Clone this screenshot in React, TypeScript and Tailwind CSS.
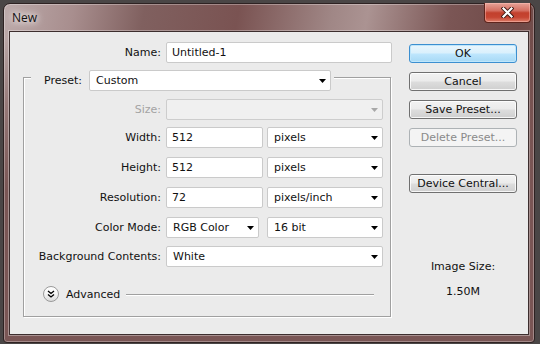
import React from 'react';

const Arrow = ({ disabled }: { disabled?: boolean }) => (
    <svg width="7" height="4" viewBox="0 0 7 4" className="shrink-0">
        <path d="M0 0h7L3.5 4z" fill={disabled ? '#a8a8a8' : '#000'} />
    </svg>
);

const Combo = ({ value, className, disabled }: { value: string; className: string; disabled?: boolean }) => (
    <div
        className={`flex h-[21px] items-center justify-between rounded-[2px] border pl-[6px] pr-[4px] ${
            disabled ? 'border-[#cdcdcd] bg-[#f0f0f0]' : 'border-[#cacaca] bg-white'
        } ${className}`}
    >
        <span>{value}</span>
        <Arrow disabled={disabled} />
    </div>
);

const TextBox = ({ value, className }: { value: string; className: string }) => (
    <div className={`flex h-[21px] items-center rounded-[2px] border border-[#cacaca] bg-white pl-[5px] ${className}`}>
        {value}
    </div>
);

const Row = ({ label, className, children, muted }: { label: string; className: string; children: React.ReactNode; muted?: boolean }) => (
    <div className={`flex h-[21px] items-center ${className}`}>
        <div className={`w-[137px] text-right ${muted ? 'text-[#a3a3a3]' : ''}`}>{label}</div>
        <div className="ml-[5px] flex items-center">{children}</div>
    </div>
);

const Button = ({ label, className, variant }: { label: string; className: string; variant?: 'default' | 'disabled' }) => {
    let look =
        'border-[#707070] bg-[linear-gradient(180deg,#f2f2f2_0%,#ebebeb_48%,#dddddd_52%,#cfcfcf_100%)] shadow-[inset_0_0_0_1px_rgba(255,255,255,0.8)]';
    if (variant === 'default') {
        look =
            'border-[#3c8fd0] bg-[linear-gradient(180deg,#eaf6fd_0%,#d9f0fc_48%,#bee6fd_52%,#a7d9f5_100%)] shadow-[inset_0_0_0_1px_#bfe6fb]';
    }
    if (variant === 'disabled') {
        look = 'border-[#adb2b5] bg-[#f4f4f4] text-[#8a8a8a]';
    }
    return (
        <div className={`flex h-[19px] w-[108px] items-center justify-center rounded-[3px] border ${look} ${className}`}>
            {label}
        </div>
    );
};

const App: React.FC = () => {
    return (
        <div className="h-[344px] w-[540px] overflow-hidden bg-[#4a4646] pl-[3px] pt-[3px]">
            <div className="flex h-[340px] w-[532px] flex-col rounded-t-[7px] rounded-b-[4px] border border-[#2e2222] bg-[linear-gradient(180deg,transparent_0%,transparent_10%,rgba(122,86,85,0.55)_30%,#7a5655_55%,#7a5655_100%),linear-gradient(100deg,#bcaaaa_0%,#a88e8e_12%,#80605f_24%,#7a5352_40%,#a08786_56%,#ab9392_62%,#7b5655_76%,#6e4947_88%,#835e5c_100%)] shadow-[inset_0_0_0_1px_rgba(255,255,255,0.3)]">
                {/* title bar */}
                <div className="flex h-[27px] items-start justify-between">
                    <div className="self-center pl-[8px] font-['Open_Sans',sans-serif] text-[12px] leading-[16px] text-[#111] [text-shadow:0_0_6px_#fff,0_0_10px_rgba(255,255,255,0.9)]">
                        New
                    </div>
                    <div className="-mt-[1px] mr-[3px] flex h-[20px] w-[47px] items-center justify-center rounded-b-[4px] border border-t-0 border-[#5e241c] bg-[linear-gradient(180deg,#e7a398_0%,#d46f61_40%,#c2402d_52%,#c64532_75%,#dd7d69_100%)] shadow-[inset_0_0_0_1px_rgba(255,200,190,0.45)]">
                        <svg width="13" height="11" viewBox="0 0 13 11">
                            <path d="M2.5 1.5L10.5 9.5M10.5 1.5L2.5 9.5" stroke="#3b1712" strokeWidth="4" strokeLinecap="square" />
                            <path d="M2.5 1.5L10.5 9.5M10.5 1.5L2.5 9.5" stroke="#fff" strokeWidth="2.2" strokeLinecap="square" />
                        </svg>
                    </div>
                </div>

                {/* client area */}
                <div className="px-[5px] pb-[7px]">
                    <div className="flex h-[304px] w-[520px] border border-[#3d2e2e] bg-[#ebebeb] font-['DejaVu_Sans',sans-serif] text-[11px] leading-[13px] text-[#111] shadow-[0_0_0_1px_rgba(255,255,255,0.35)]">
                        {/* left column */}
                        <div className="w-[382px]">
                            <div className="mt-[10px] flex h-[21px] items-center">
                                <div className="w-[151px] text-right">Name:</div>
                                <TextBox value="Untitled-1" className="ml-[5px] w-[226px]" />
                            </div>

                            <div className="ml-[13px] mt-[14px] h-[240px] w-[368px] border border-[#a0a0a0] shadow-[inset_1px_1px_0_#fff,1px_1px_0_#fff]">
                                <div className="-mt-[8px] ml-[7px] flex w-fit items-center bg-[#ebebeb] pr-[3px]">
                                    <div className="w-[58px] pr-[7px] text-right">Preset:</div>
                                    <Combo value="Custom" className="w-[242px]" />
                                </div>

                                <Row label="Size:" className="mt-[8px]" muted>
                                    <Combo value="" className="w-[217px]" disabled />
                                </Row>
                                <Row label="Width:" className="mt-[7px]">
                                    <TextBox value="512" className="w-[97px]" />
                                    <Combo value="pixels" className="ml-[4px] w-[116px]" />
                                </Row>
                                <Row label="Height:" className="mt-[9px]">
                                    <TextBox value="512" className="w-[97px]" />
                                    <Combo value="pixels" className="ml-[4px] w-[116px]" />
                                </Row>
                                <Row label="Resolution:" className="mt-[9px]">
                                    <TextBox value="72" className="w-[97px]" />
                                    <Combo value="pixels/inch" className="ml-[4px] w-[116px]" />
                                </Row>
                                <Row label="Color Mode:" className="mt-[9px]">
                                    <Combo value="RGB Color" className="w-[93px]" />
                                    <Combo value="16 bit" className="ml-[8px] w-[116px]" />
                                </Row>
                                <Row label="Background Contents:" className="mt-[8px]">
                                    <Combo value="White" className="w-[217px]" />
                                </Row>

                                <div className="ml-[19px] mt-[19px] flex h-[16px] items-center">
                                    <div className="flex h-[16px] w-[16px] items-center justify-center rounded-full border border-[#9a9a9a] bg-[linear-gradient(180deg,#ffffff_0%,#f4f4f4_50%,#dcdcdc_100%)]">
                                        <svg width="8" height="8" viewBox="0 0 8 8">
                                            <path d="M1 1l3 2.5L7 1M1 4.5l3 2.5L7 4.5" fill="none" stroke="#000" strokeWidth="1.3" />
                                        </svg>
                                    </div>
                                    <span className="ml-[7px]">Advanced</span>
                                    <div className="ml-[6px] mr-[16px] flex-1 border-t border-[#a0a0a0] shadow-[0_1px_0_#fff]" />
                                </div>
                            </div>
                        </div>

                        {/* right column */}
                        <div className="ml-[17px] flex w-[108px] flex-col">
                            <Button label="OK" className="mt-[12px]" variant="default" />
                            <Button label="Cancel" className="mt-[9px]" />
                            <Button label="Save Preset..." className="mt-[9px]" />
                            <Button label="Delete Preset..." className="mt-[9px]" variant="disabled" />
                            <Button label="Device Central..." className="mt-[27px]" />
                            <div className="mt-[67px] text-center">Image Size:</div>
                            <div className="mt-[12px] text-center">1.50M</div>
                        </div>
                    </div>
                </div>
            </div>
        </div>
    );
};

export default App;
